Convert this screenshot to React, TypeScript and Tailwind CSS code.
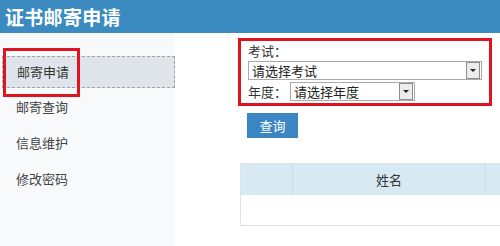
const SelectBox = ({ text, width }: { text: string; width: string }) => {
  return (
    <div className={`${width} h-[19px] border border-[#a9a9a9] bg-white flex items-center justify-between`}>
      <span className="pl-[3px] text-[13px] leading-none text-[#222]">{text}</span>
      {/* 下拉箭头 */}
      <div className="w-[14px] h-[17px] mr-[1px] border border-[#8e8e8e] bg-[#ececec] flex items-center justify-center">
        <div className="w-0 h-0 border-l-[3px] border-r-[3px] border-t-[3px] border-l-transparent border-r-transparent border-t-[#222]" />
      </div>
    </div>
  );
};

const App = () => {
  const menus = ['邮寄查询', '信息维护', '修改密码'];

  return (
    <div
      className="w-[500px] h-[246px] overflow-hidden bg-white text-[#333]"
      style={{ fontFamily: '"Noto Sans CJK SC", "Liberation Sans", sans-serif' }}
    >
      {/* 标题栏 */}
      <div className="h-[33px] bg-[#3b8bc1] flex items-center pl-[5px]">
        <p className="text-white text-[19px] font-bold leading-none tracking-[0.3px]">证书邮寄申请</p>
      </div>

      <div className="flex h-[213px]">
        {/* 侧边栏 */}
        <div className="w-[175px] shrink-0 bg-[#f7f9fb] pt-[23px] pl-[2px]">
          <div className="relative">
            <div className="h-[32px] bg-[#dfe5ea] border border-dashed border-[#9aa3aa] flex items-center pl-[14px] text-[13px]">
              邮寄申请
            </div>
            <div className="absolute left-[1px] top-[-8px] w-[77px] h-[49px] border-[3px] border-[#e0141e]" />
          </div>
          <div className="flex flex-col pl-[14px] pt-[10px] gap-[18px] text-[13px] text-[#444]">
            {menus.map((m) => (
              <p key={m} className="leading-[18px]">
                {m}
              </p>
            ))}
          </div>
        </div>

        {/* 主体 */}
        <div className="flex-1 min-w-0 overflow-hidden pt-[5px]">
          <div className="ml-[63px] w-[254px] h-[68px] border-[3px] border-[#e0141e] pl-[7px] pt-[2px]">
            <p className="text-[13px] leading-[16px] text-[#333]">考试：</p>
            <div className="mt-[2px]">
              <SelectBox text="请选择考试" width="w-[234px]" />
            </div>
            <div className="flex items-center gap-[3px] mt-[2px]">
              <p className="text-[13px] leading-none text-[#333]">年度：</p>
              <SelectBox text="请选择年度" width="w-[125px]" />
            </div>
          </div>

          <div className="ml-[72px] mt-[7px] w-[51px] h-[25px] bg-[#3a85c2] flex items-center justify-center text-white text-[13px]">
            查询
          </div>

          <div className="ml-[65px] mt-[25px] w-[300px] border border-[#e2e2e2]">
            <div className="flex h-[31px] bg-[#d7eaf4]">
              <div className="w-[52px] border-r border-[#c9dde8]" />
              <div className="w-[193px] border-r border-[#c9dde8] flex items-center justify-center text-[13px] text-[#333]">
                姓名
              </div>
              <div className="flex-1" />
            </div>
            <div className="h-[30px] bg-white" />
          </div>
        </div>
      </div>
    </div>
  );
};

export default App;
